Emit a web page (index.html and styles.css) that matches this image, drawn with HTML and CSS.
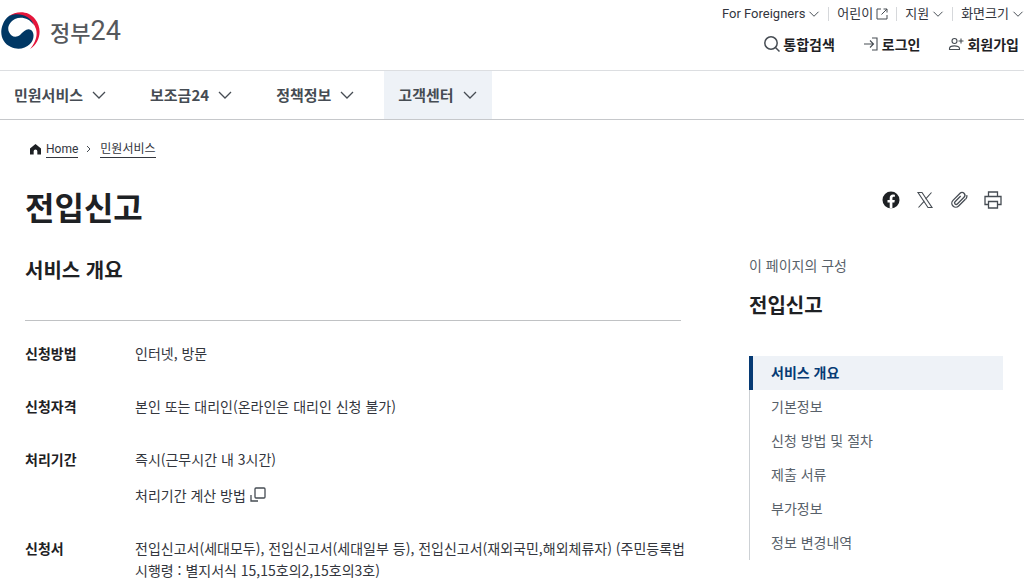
FILE: index.html
```html
<!DOCTYPE html>
<html lang="ko">
<head>
    <meta charset="UTF-8">
    <meta name="viewport" content="width=device-width, initial-scale=1">
    <title>전입신고 | 정부24</title>
    <link rel="stylesheet" href="styles.css">
</head>
<body>
    <!-- shared icons -->
    <svg width="0" height="0" class="sprite" aria-hidden="true">
        <symbol id="chevron" viewBox="0 0 16 16">
            <path d="M2 5l6 6 6-6"/>
        </symbol>
    </svg>

    <header class="header">
        <a href="#" class="logo">
            <svg class="logo-mark" viewBox="0 0 40 40" aria-hidden="true">
                <path fill="#e4163b" d="M8 5C15 0 27-1 34 8c8 10 5 24-5 30 5-6 8-13 6-20C32 7 19 2 8 5z"/>
                <path fill="#003764" d="M8 5C17 1 29 4 33 14 28 7 20 5 14 8 8 11 6 17 8 21c2 5 7 6 11 3 4-4 7-7 11-5 4 3 3 10-1 14-5 5-13 6-19 3C1 32-2 22 2 13 3 10 5 7 8 5z"/>
            </svg>
            <span class="logo-text">정부<span class="logo-num">24</span></span>
        </a>
        <div class="header-menu">
            <ul class="top-links">
                <li><button type="button">For Foreigners <svg class="chevron-sm"><use href="#chevron"/></svg></button></li>
                <li><a href="#">어린이
                    <svg class="icon-sm" viewBox="0 0 12 12"><path d="M5 1H1v10h10V7M7.500 1H11v3.500M11 1L5.500 6.500"/></svg></a></li>
                <li><button type="button">지원 <svg class="chevron-sm"><use href="#chevron"/></svg></button></li>
                <li><button type="button">화면크기 <svg class="chevron-sm"><use href="#chevron"/></svg></button></li>
            </ul>
            <ul class="user-links">
                <li><button type="button">
                    <svg class="icon" viewBox="0 0 16 16"><circle cx="7" cy="7" r="6.200"/><path d="M11.500 11.500l4 4"/></svg>통합검색</button></li>
                <li><a href="#">
                    <svg class="icon thin" viewBox="0 0 16 16"><path d="M9 2h5v12H9M1 8h9M7 4.500L10.500 8 7 11.500"/></svg>로그인</a></li>
                <li><a href="#">
                    <svg class="icon thin" viewBox="0 0 16 16"><circle cx="6.500" cy="5" r="2.500"/><path d="M1.500 13.500v-1c0-3.500 10-3.500 10 0v1zM13 2.500v5M10.500 5h5"/></svg>회원가입</a></li>
            </ul>
        </div>
    </header>

    <nav class="main-nav">
        <button type="button">민원서비스 <svg><use href="#chevron"/></svg></button>
        <button type="button">보조금24 <svg><use href="#chevron"/></svg></button>
        <button type="button">정책정보 <svg><use href="#chevron"/></svg></button>
        <button type="button" class="active">고객센터 <svg><use href="#chevron"/></svg></button>
    </nav>

    <div class="container">
        <nav class="breadcrumb">
            <svg class="home" viewBox="0 0 12 12" aria-hidden="true"><path d="M6 0L0 5v6.500h4V8a2 2 0 014 0v3.500h4V5z"/></svg>
            <a href="#">Home</a>
            <svg class="sep" viewBox="0 0 8 8" aria-hidden="true"><path d="M2 1l3 3-3 3"/></svg>
            <a href="#">민원서비스</a>
        </nav>

        <div class="title-row">
            <h1>전입신고</h1>
            <div class="share">
                <button type="button" aria-label="Facebook">
                    <svg viewBox="0 0 20 20"><circle cx="10" cy="10" r="8.500" fill="#1e2124" stroke="none"/><path fill="#fff" stroke="none" d="M8.700 18.600v-6.200H6.500V9.900h2.200V8c0-2.300 1.300-3.500 3.300-3.500l1.900.2v2.100h-1.100c-1.100 0-1.400.7-1.400 1.400v1.700h2.400l-.4 2.500h-2v6.200z"/></svg>
                </button>
                <button type="button" aria-label="X">
                    <svg class="thin" viewBox="0 0 20 20"><path d="M3 2.500h4l10 15h-4zM16.500 2.500l-6 6.700M3.500 17.500l6-6.700"/></svg>
                </button>
                <button type="button" aria-label="URL 복사">
                    <svg viewBox="0 0 20 20"><g transform="rotate(45 10 10)"><path d="M14 5v9.500a4 4 0 01-8 0V4.500a2.800 2.800 0 015.600 0v9.500a1.600 1.600 0 01-3.200 0V6"/><path d="M14 5V4a4 4 0 00-2-3"/></g></svg>
                </button>
                <button type="button" aria-label="인쇄">
                    <svg viewBox="0 0 20 20"><path d="M5.500 6.500V2h9v4.500M5.500 14.500H2v-8h16v8h-3.500M5.500 11.500h9V18h-9z"/></svg>
                </button>
            </div>
        </div>

        <div class="content">
            <main>
                <h2>서비스 개요</h2>
                <dl class="info">
                    <dt>신청방법</dt>
                    <dd>인터넷, 방문</dd>
                    <dt>신청자격</dt>
                    <dd>본인 또는 대리인(온라인은 대리인 신청 불가)</dd>
                    <dt>처리기간</dt>
                    <dd>
                        <p>즉시(근무시간 내 3시간)</p>
                        <a href="#" class="popup-link">처리기간 계산 방법
                            <svg viewBox="0 0 16 16"><rect x="5" y="1" width="10" height="10" rx="1"/><path d="M1 8v6h7"/></svg></a>
                    </dd>
                    <dt>신청서</dt>
                    <dd>전입신고서(세대모두), 전입신고서(세대일부 등), 전입신고서(재외국민,해외체류자) (주민등록법 시행령 : 별지서식 15,15호의2,15호의3호)</dd>
                </dl>
            </main>

            <aside class="side">
                <p class="side-label">이 페이지의 구성</p>
                <p class="side-title">전입신고</p>
                <ul>
                    <li><a href="#" class="active">서비스 개요</a></li>
                    <li><a href="#">기본정보</a></li>
                    <li><a href="#">신청 방법 및 절차</a></li>
                    <li><a href="#">제출 서류</a></li>
                    <li><a href="#">부가정보</a></li>
                    <li><a href="#">정보 변경내역</a></li>
                </ul>
            </aside>
        </div>
    </div>
</body>
</html>
```
FILE: styles.css
```css
* {
    box-sizing: border-box;
}

body {
    margin: 0;
    background-color: #fff;
    color: #33363d;
    font-family: "Noto Sans CJK KR", sans-serif;
    font-size: 14px;
    line-height: 22px;
}

h1, h2, p, ul, dl, dd {
    margin: 0;
    padding: 0;
}

ul {
    list-style: none;
}

a {
    color: inherit;
    text-decoration: none;
}

button {
    padding: 0;
    border: none;
    background: none;
    color: inherit;
    font: inherit;
    cursor: pointer;
}

svg {
    flex: none;
    fill: none;
    stroke: #464c53;
    stroke-width: 1.3;
}

.sprite {
    position: absolute;
}

/* header */
.header {
    display: flex;
    justify-content: space-between;
    height: 71px;
    border-bottom: 1px solid #dcdee1;
}

.logo {
    display: flex;
    align-items: center;
    gap: 9px;
    padding: 0 0 8px 1px;
    color: #55585c;
}

.logo-mark {
    width: 40px;
    height: 40px;
    stroke: none;
}

.logo-text {
    display: flex;
    align-items: center;
    font-size: 22px;
    font-weight: 500;
}

.logo-num {
    font-family: Roboto, sans-serif;
    font-size: 27px;
    font-weight: 400;
}

.header-menu {
    display: flex;
    flex-direction: column;
    align-items: flex-end;
    gap: 12px;
    padding-top: 7px;
}

.top-links, .user-links {
    display: flex;
    white-space: nowrap;
}

.top-links {
    align-items: center;
    font-family: Roboto, "Noto Sans CJK KR", sans-serif;
    font-size: 13px;
    line-height: 20px;
}

.top-links li {
    display: flex;
    align-items: center;
    height: 14px;
    padding: 0 8px 0 8px;
    border-left: 1px solid #d6d8db;
}

.top-links li:first-child {
    border-left: none;
}

.top-links li:last-child {
    padding-right: 0;
}

.top-links a, .top-links button {
    display: flex;
    align-items: center;
    gap: 3px;
}

.chevron-sm, .icon-sm {
    width: 12px;
    height: 12px;
}

.icon-sm {
    stroke-width: 1;
}

.user-links {
    gap: 28px;
    padding-right: 5px;
    color: #1e2124;
    font-weight: 700;
}

.user-links a, .user-links button {
    display: flex;
    align-items: center;
    gap: 3px;
}

.icon {
    width: 16px;
    height: 16px;
    stroke-width: 1.5;
}

.thin {
    stroke-width: 1.1;
}

/* main navigation */
.main-nav {
    display: flex;
    gap: 15px;
    height: 49px;
    border-bottom: 1px solid #c6c8cb;
}

.main-nav button {
    display: flex;
    align-items: center;
    gap: 8px;
    padding: 0 14px;
    color: #464c53;
    font-size: 15px;
    font-weight: 700;
}

.main-nav svg {
    width: 16px;
    height: 16px;
}

.main-nav .active {
    background-color: #eef2f7;
}

/* page */
.container {
    padding: 20px 21px 0 25px;
}

.breadcrumb {
    display: flex;
    align-items: center;
    gap: 5px;
    height: 18px;
    padding-left: 5px;
    font-family: Roboto, "Noto Sans CJK KR", sans-serif;
    font-size: 12px;
    line-height: 16px;
}

.breadcrumb a {
    border-bottom: 1px solid #33363d;
}

.home {
    width: 11px;
    height: 11px;
    fill: #1e2124;
    stroke: none;
}

.sep {
    width: 8px;
    height: 8px;
    margin: 0 2px;
    stroke-width: 1;
}

.title-row {
    display: flex;
    justify-content: space-between;
    align-items: flex-start;
    padding-top: 24px;
}

h1 {
    color: #1e2124;
    font-size: 32px;
    line-height: 48px;
}

.share {
    display: flex;
    gap: 14px;
    padding-top: 8px;
}

.share button, .share svg {
    display: block;
    width: 20px;
    height: 20px;
}

.content {
    display: grid;
    grid-template-columns: minmax(0, 1fr) 254px;
    gap: 68px;
    padding-top: 24px;
}

h2 {
    padding: 2px 0 36px;
    border-bottom: 1px solid #c0c2c4;
    color: #1e2124;
    font-size: 20px;
    line-height: 28px;
}

.info {
    display: grid;
    grid-template-columns: 110px minmax(0, 1fr);
    row-gap: 31px;
    margin-right: -8px;
    padding-top: 21px;
    word-break: keep-all;
}

.info dt {
    color: #1e2124;
    font-weight: 700;
}

.popup-link {
    display: flex;
    align-items: center;
    gap: 4px;
    margin-top: 14px;
}

.popup-link svg {
    width: 16px;
    height: 16px;
}

.side-label {
    color: #58616a;
}

.side-title {
    padding: 14px 0 36px;
    color: #1e2124;
    font-size: 20px;
    font-weight: 700;
    line-height: 30px;
}

.side a {
    display: block;
    padding: 0 0 2px 21px;
    border-left: 1px solid #cdd1d5;
    color: #58616a;
    line-height: 32px;
}

.side .active {
    padding-left: 18px;
    border-left: 4px solid #063a74;
    background-color: #eef2f7;
    color: #063a74;
    font-weight: 700;
}
```
